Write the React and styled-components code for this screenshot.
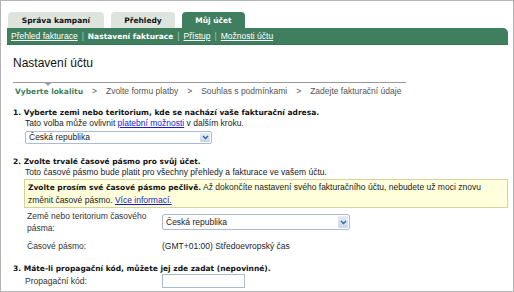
import React from 'react'
import styled, { createGlobalStyle } from 'styled-components'

const green = '#3f7f5f'

const GlobalStyle = createGlobalStyle`
  html, body {
    margin: 0;
    padding: 0;
    background: #fff;
  }
  body {
    font-family: "Liberation Sans", Arial, sans-serif;
    font-size: 8.5px;
    color: #222;
  }
`

const Frame = styled.div`
  width: 514px;
  height: 292px;
  box-sizing: border-box;
  border: 1px solid #b4b4b4;
  background: #fff;
  padding: 11px 5px 0 6px;
  overflow: hidden;
`

const Tabs = styled.div`
  display: flex;
  gap: 7px;
  padding-left: 1px;
  height: 16px;
  align-items: flex-end;
`

const Tab = styled.div`
  width: ${p => p.$w}px;
  height: 16px;
  box-sizing: border-box;
  border-radius: 4px 4px 0 0;
  background: ${p => (p.$active ? green : '#dde4de')};
  color: ${p => (p.$active ? '#fff' : '#111')};
  font-family: "DejaVu Sans", Verdana, sans-serif;
  font-weight: bold;
  font-size: 7.5px;
  display: flex;
  align-items: center;
  justify-content: center;
  padding-top: 1px;
`

const Bar = styled.div`
  height: 17px;
  background: ${green};
  border-radius: 0 5px 0 0;
  display: flex;
  align-items: center;
  padding-left: 4px;
  color: #fff;
  border-bottom: 1px dotted #2f6a4c;
  box-sizing: border-box;
  white-space: nowrap;
`

const BarLink = styled.span`
  color: #fff;
  text-decoration: ${p => (p.$current ? 'none' : 'underline')};
  font-weight: ${p => (p.$current ? 'bold' : 'normal')};
  font-family: ${p => (p.$current ? '"DejaVu Sans", Verdana, sans-serif' : 'inherit')};
  font-size: ${p => (p.$current ? '7.5px' : 'inherit')};
`

const Sep = styled.span`
  color: #a9c8b6;
  margin: 0 4px;
`

const Content = styled.div`
  padding-left: 6px;
`

const Title = styled.h1`
  margin: 11px 0 12px;
  font-size: 12px;
  line-height: 14px;
  font-weight: normal;
  color: #111;
`

const Steps = styled.div`
  position: relative;
  width: 391px;
  border-top: 1px solid #9a9a9a;
  padding: 3px 0 0 2px;
  display: flex;
  gap: 9px;
  line-height: 11px;
  color: #555;
  white-space: nowrap;

  & > span {
    flex-shrink: 0;
  }
`

const Marker = styled.span`
  position: absolute;
  top: 0;
  left: 32px;
  width: 0;
  height: 0;
  border-left: 3px solid transparent;
  border-right: 3px solid transparent;
  border-top: 3px solid #9a9a9a;
`

const Step = styled.span`
  color: ${p => (p.$active ? green : '#555')};
  font-weight: ${p => (p.$active ? 'bold' : 'normal')};
  font-family: ${p => (p.$active ? '"DejaVu Sans", Verdana, sans-serif' : 'inherit')};
  font-size: ${p => (p.$active ? '7.5px' : 'inherit')};
`

const Section = styled.div`
  margin-top: ${p => p.$top}px;
`

const Heading = styled.div`
  font-family: "DejaVu Sans", Verdana, sans-serif;
  font-weight: bold;
  font-size: 7.5px;
  line-height: 11px;
  color: #111;
  white-space: nowrap;
`

const Body = styled.div`
  padding-left: 12px;
  line-height: 11px;
`

const Link = styled.a`
  color: #1a1ad0;
  text-decoration: underline;
`

const SelectBox = styled.div`
  width: ${p => p.$w}px;
  height: ${p => p.$h}px;
  box-sizing: border-box;
  margin-top: ${p => p.$top || 0}px;
  border: 1px solid #a9bcd4;
  border-radius: 2px;
  background: #fff;
  display: flex;
  align-items: center;
  justify-content: space-between;
  padding: 0 1px 0 3px;
  color: #222;
`

const DropButton = styled.span`
  width: 10px;
  height: ${p => p.$h}px;
  border-radius: 1px;
  background: linear-gradient(#e4ecf8, #c8d6ee);
  display: flex;
  align-items: center;
  justify-content: center;
`

const Notice = styled.div`
  margin: 1px 0 0 -1px;
  background: #ffffdc;
  border: 1px solid #d2d29a;
  padding: 1px 3px 0;
  line-height: 13px;
  color: #222;
  white-space: nowrap;
`

const Strong = styled.span`
  font-family: "DejaVu Sans", Verdana, sans-serif;
  font-weight: bold;
  font-size: 7.5px;
  color: #111;
`

const Row = styled.div`
  display: grid;
  grid-template-columns: ${p => 135 + (p.$indent || 0)}px 1fr;
  align-items: center;
  padding-left: ${p => 2 - (p.$indent || 0)}px;
  margin-top: ${p => p.$top}px;
  line-height: 12px;
`

const Label = styled.div`
  color: #333;
`

const TextInput = styled.div`
  width: 83px;
  height: 14px;
  box-sizing: border-box;
  border: 1px solid #a9bcd4;
`

const Chevron = () => (
  <svg width="7" height="5" viewBox="0 0 7 5">
    <path d="M1 1 L3.5 3.5 L6 1" fill="none" stroke="#3d5f99" strokeWidth="1.3" />
  </svg>
)

const Select = ({ w, h, top, children }) => (
  <SelectBox $w={w} $h={h} $top={top}>
    <span>{children}</span>
    <DropButton $h={h - 4}>
      <Chevron />
    </DropButton>
  </SelectBox>
)

export default function App() {
  return (
    <>
      <GlobalStyle />
      <Frame>
        <Tabs>
          <Tab $w={96}>Správa kampaní</Tab>
          <Tab $w={64}>Přehledy</Tab>
          <Tab $w={63} $active>Můj účet</Tab>
        </Tabs>
        <Bar>
          <BarLink>Přehled fakturace</BarLink>
          <Sep>|</Sep>
          <BarLink $current>Nastavení fakturace</BarLink>
          <Sep>|</Sep>
          <BarLink>Přístup</BarLink>
          <Sep>|</Sep>
          <BarLink>Možnosti účtu</BarLink>
        </Bar>
        <Content>
          <Title>Nastavení účtu</Title>
          <Steps>
            <Marker />
            <Step $active>Vyberte lokalitu</Step>
            <span>&gt;</span>
            <Step>Zvolte formu platby</Step>
            <span>&gt;</span>
            <Step>Souhlas s podmínkami</Step>
            <span>&gt;</span>
            <Step>Zadejte fakturační údaje</Step>
          </Steps>

          <Section $top={10}>
            <Heading>1. Vyberte zemi nebo teritorium, kde se nachází vaše fakturační adresa.</Heading>
            <Body>
              Tato volba může ovlivnit <Link>platební možnosti</Link> v dalším kroku.
              <Select w={187} h={13} top={2}>Česká republika</Select>
            </Body>
          </Section>

          <Section $top={12}>
            <Heading>2. Zvolte trvalé časové pásmo pro svůj účet.</Heading>
            <Body>
              Toto časové pásmo bude platit pro všechny přehledy a fakturace ve vašem účtu.
              <Notice>
                <Strong>Zvolte prosím své časové pásmo pečlivě.</Strong> Až dokončíte nastavení svého fakturačního účtu, nebudete už moci znovu
                <br />
                změnit časové pásmo. <Link>Více informací.</Link>
              </Notice>
              <Row $top={2}>
                <Label>
                  Země nebo teritorium časového
                  <br />
                  pásma:
                </Label>
                <Select w={188} h={16}>Česká republika</Select>
              </Row>
              <Row $top={6}>
                <Label>Časové pásmo:</Label>
                <span>(GMT+01:00) Středoevropský čas</span>
              </Row>
            </Body>
          </Section>

          <Section $top={11}>
            <Heading>3. Máte-li propagační kód, můžete jej zde zadat (nepovinné).</Heading>
            <Body>
              <Row $top={0} $indent={2}>
                <Label>Propagační kód:</Label>
                <TextInput />
              </Row>
            </Body>
          </Section>
        </Content>
      </Frame>
    </>
  )
}
